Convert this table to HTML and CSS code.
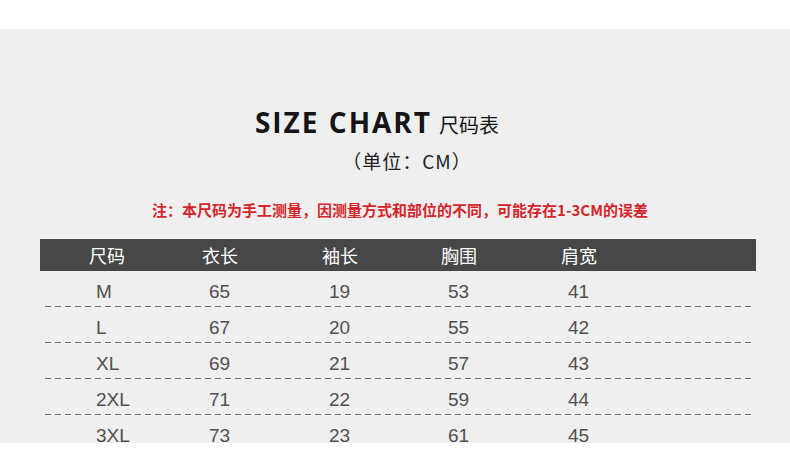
FILE: index.html
```html
<!DOCTYPE html>
<html lang="zh-CN">
<head>
<meta charset="utf-8">
<title>SIZE CHART 尺码表</title>
<link rel="stylesheet" href="styles.css">
</head>
<body>
<div class="top"></div>
<section class="panel">
  <h1 class="title"><span class="title-en">SIZE CHART</span><span class="title-cn">尺码表</span></h1>
  <p class="unit">（单位：CM）</p>
  <p class="note">注：本尺码为手工测量，因测量方式和部位的不同，可能存在1-3CM的误差</p>
  <div class="table">
    <div class="row head">
      <div class="cell">尺码</div>
      <div class="cell">衣长</div>
      <div class="cell">袖长</div>
      <div class="cell">胸围</div>
      <div class="cell">肩宽</div>
    </div>
    <div class="row">
      <div class="cell">M</div><div class="cell">65</div><div class="cell">19</div><div class="cell">53</div><div class="cell">41</div>
    </div>
    <div class="row">
      <div class="cell">L</div><div class="cell">67</div><div class="cell">20</div><div class="cell">55</div><div class="cell">42</div>
    </div>
    <div class="row">
      <div class="cell">XL</div><div class="cell">69</div><div class="cell">21</div><div class="cell">57</div><div class="cell">43</div>
    </div>
    <div class="row">
      <div class="cell">2XL</div><div class="cell">71</div><div class="cell">22</div><div class="cell">59</div><div class="cell">44</div>
    </div>
    <div class="row last">
      <div class="cell">3XL</div><div class="cell">73</div><div class="cell">23</div><div class="cell">61</div><div class="cell">45</div>
    </div>
  </div>
</section>
</body>
</html>
```

FILE: styles.css
```css
html, body {
  margin: 0;
  padding: 0;
  background: #ffffff;
  overflow: hidden;
}

body {
  width: 790px;
  height: 456px;
  font-family: "Noto Sans CJK SC", "Noto Sans", sans-serif;
}

.top {
  height: 29px;
  background: #ffffff;
}

.panel {
  height: 414px;
  background: #efefef;
  padding-top: 72px;
  box-sizing: border-box;
}

.title {
  margin: 0;
  padding-right: 36px;
  text-align: center;
  line-height: 36px;
  font-weight: normal;
  color: #151515;
  white-space: nowrap;
}

.title-en {
  font-family: "Open Sans", "Liberation Sans", sans-serif;
  font-weight: 700;
  font-size: 28px;
  letter-spacing: 2px;
}

.title-cn {
  font-family: "Noto Sans CJK SC", sans-serif;
  font-size: 20px;
  margin-left: 7px;
}

.unit {
  margin: 6px 0 0;
  padding-left: 24px;
  text-align: center;
  font-family: "Noto Sans CJK TC", "Noto Sans CJK SC", sans-serif;
  font-size: 19px;
  line-height: 24px;
  letter-spacing: 1px;
  color: #1e1e1e;
}

.note {
  margin: 27px 0 0;
  padding-left: 10px;
  text-align: center;
  font-size: 15px;
  line-height: 20px;
  font-weight: 700;
  color: #d3262c;
  white-space: nowrap;
}

.table {
  margin: 19px 0 0 40px;
  width: 716px;
}

.row {
  display: grid;
  grid-template-columns: 113px 120px 119px 120px 1fr;
  padding-left: 49px;
  padding-top: 6px;
  height: 36px;
  box-sizing: border-box;
  background-image: repeating-linear-gradient(to right, #6e6e6e 0 6px, transparent 6px 10px);
  background-size: 707px 1px;
  background-position: 5px 100%;
  background-repeat: no-repeat;
}

.row .cell {
  padding-left: 7px;
  font-family: "Liberation Sans", Arial, sans-serif;
  font-size: 19px;
  line-height: 29px;
  color: #505050;
}

.row.last {
  background-image: none;
}

.row.head {
  height: 32px;
  padding-top: 0;
  background: #474747;
  box-shadow: 0 -1px 0 #f8f8f8;
}

.row.head .cell {
  padding-left: 0;
  font-family: "Noto Sans CJK SC", sans-serif;
  font-size: 18px;
  line-height: 32px;
  color: #ffffff;
}
```
